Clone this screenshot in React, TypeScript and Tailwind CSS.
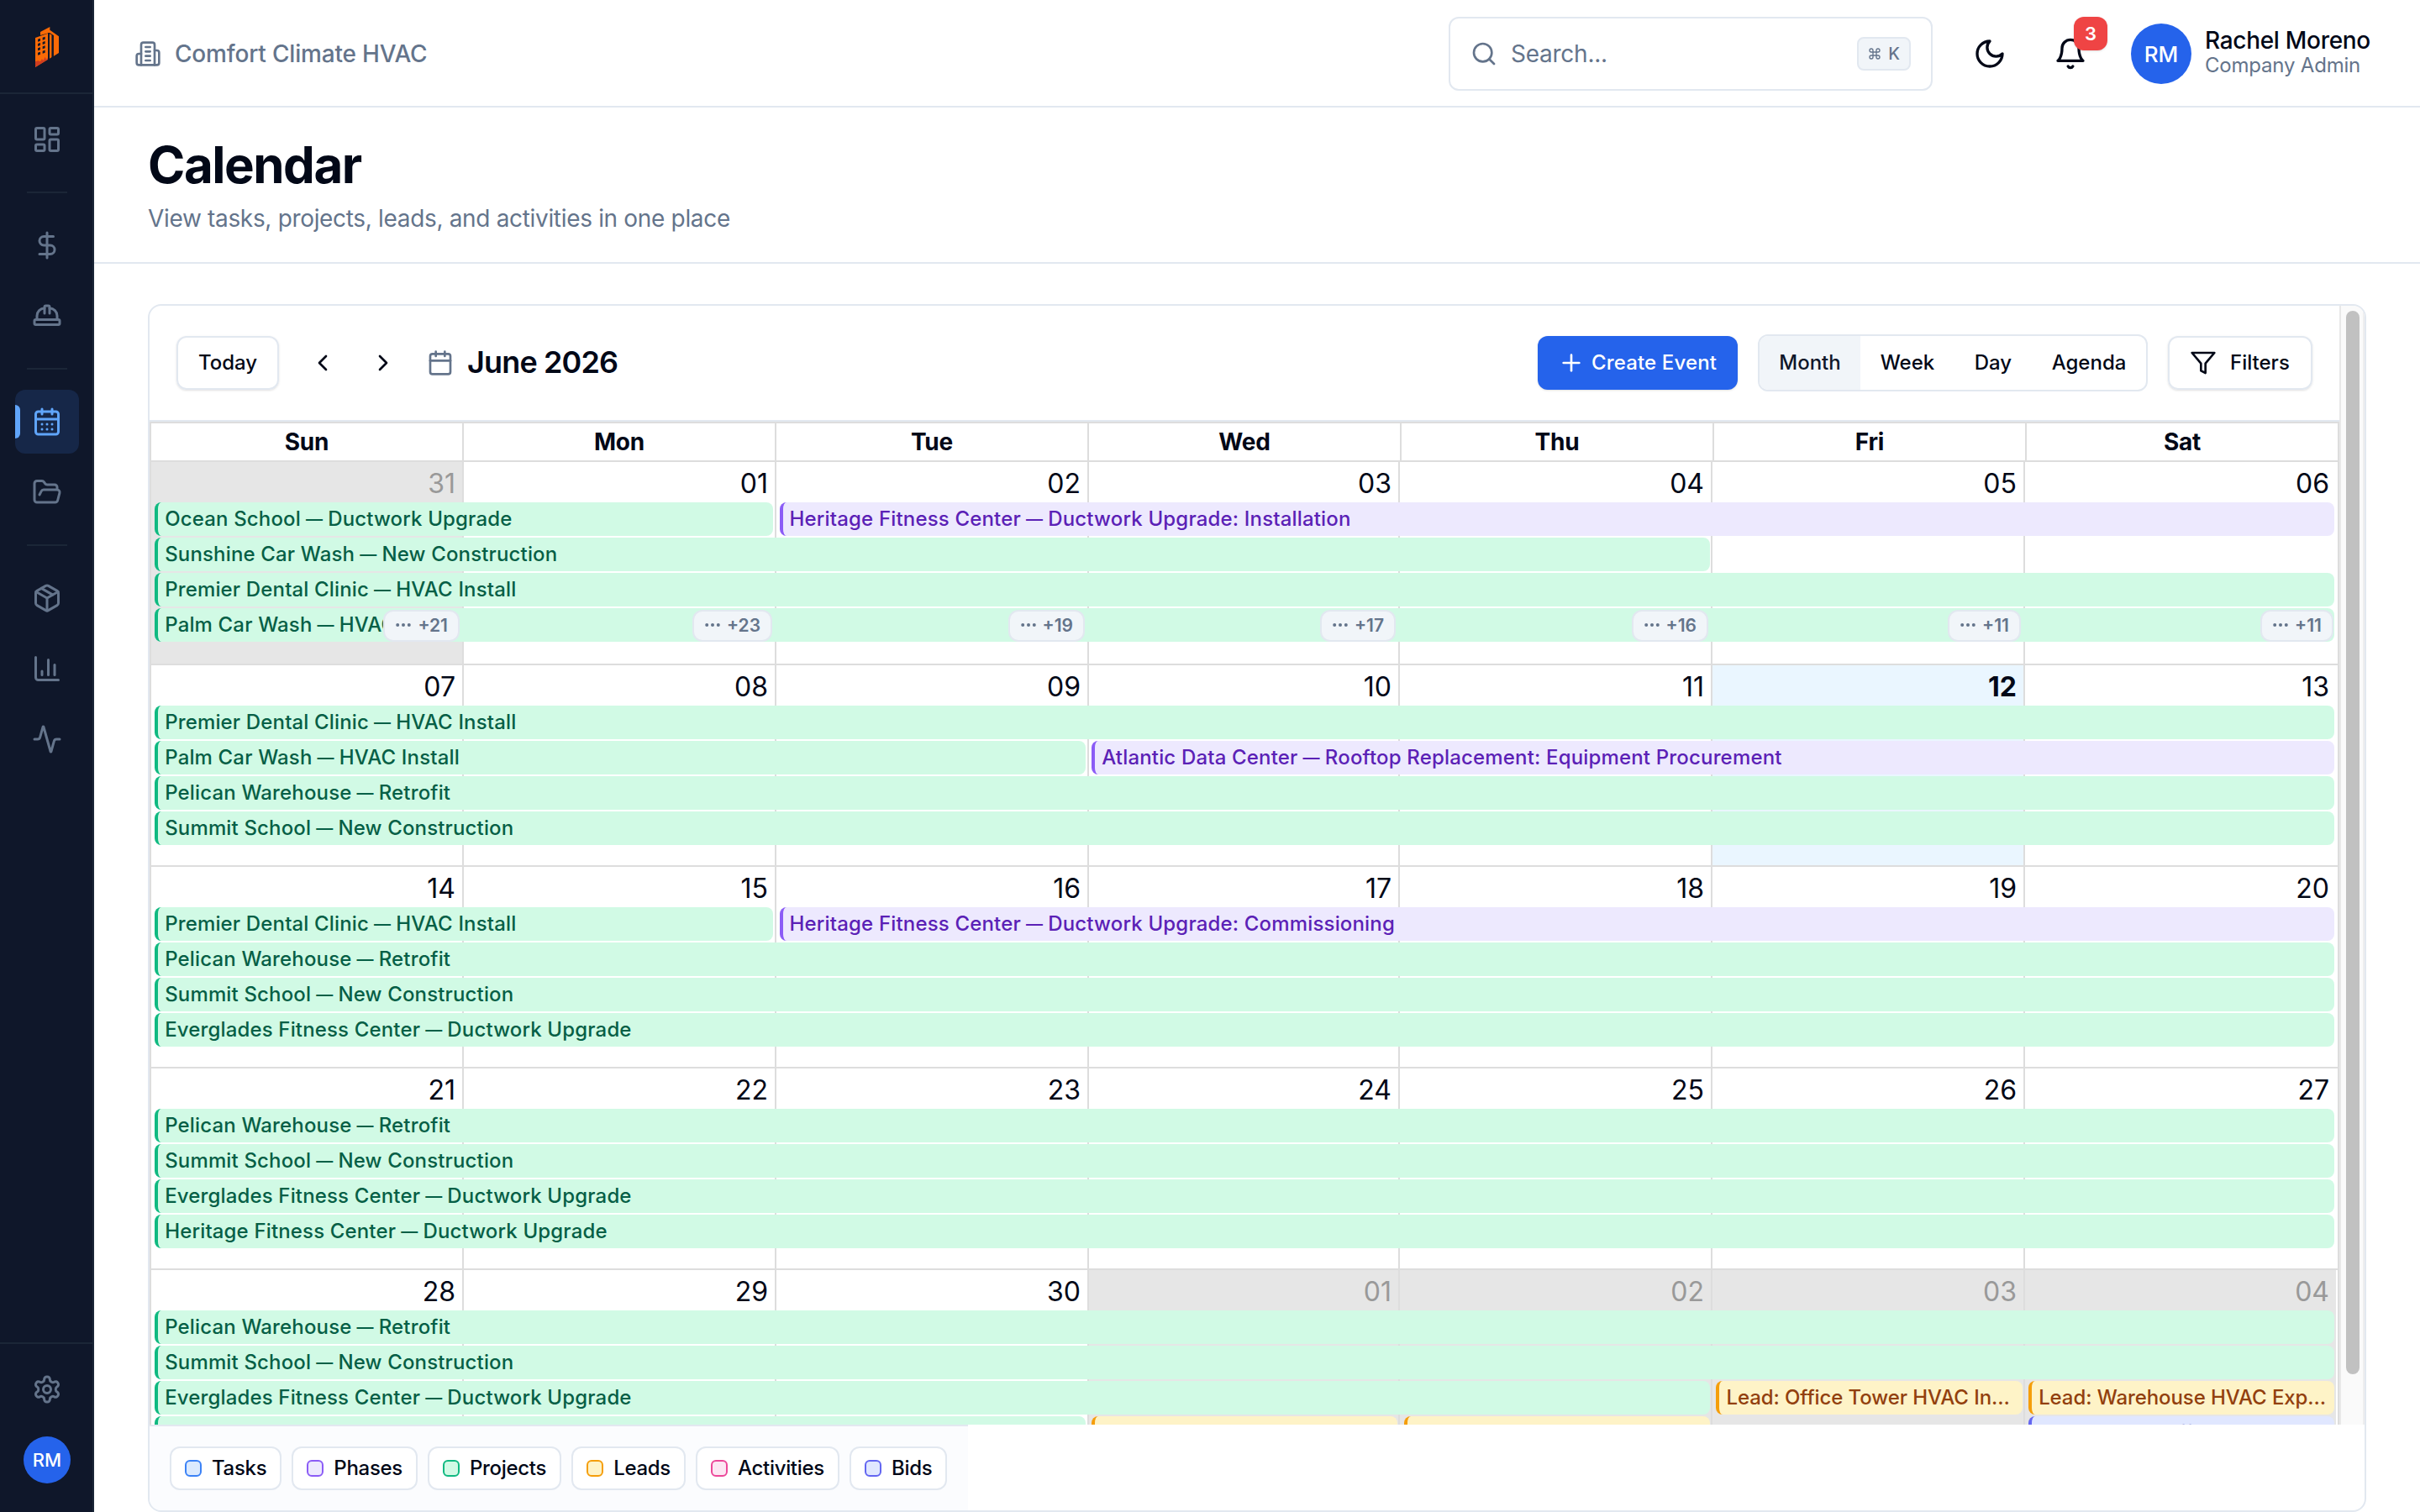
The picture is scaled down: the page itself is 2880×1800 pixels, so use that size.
import React from "react";
import {
  Activity,
  Calendar as CalendarIcon,
  CalendarDays,
  ChartColumn,
  ChevronLeft,
  ChevronRight,
  DollarSign,
  FolderOpen,
  HardHat,
  LayoutDashboard,
  Package,
  Plus,
  Search,
} from "lucide-react";

type EventKind = "project" | "phase" | "lead" | "bid";

type CalEvent = {
  title: string;
  kind: EventKind;
  start: number;
  span: number;
};

type Week = {
  days: string[];
  off?: number[];
  today?: number;
  rows: CalEvent[][];
  more?: string[];
};

const kindStyles: Record<EventKind, string> = {
  project: "border-[#10b981] bg-[#d1fae5] text-[#065f46] tracking-[0.15px]",
  phase: "border-[#8b5cf6] bg-[#ede9fe] text-[#5b21b6] tracking-[0.17px]",
  lead: "border-[#f59e0b] bg-[#fef3c7] text-[#92400e] tracking-[-0.08px]",
  bid: "border-[#6366f1] bg-[#e0e7ff] text-[#3730a3]",
};

const project = (title: string, start = 0, span = 7): CalEvent => ({ title, kind: "project", start, span });
const phase = (title: string, start: number, span: number): CalEvent => ({ title, kind: "phase", start, span });
const lead = (title: string, start: number): CalEvent => ({ title, kind: "lead", start, span: 1 });

const dayNames = ["Sun", "Mon", "Tue", "Wed", "Thu", "Fri", "Sat"];

const weeks: Week[] = [
  {
    days: ["31", "01", "02", "03", "04", "05", "06"],
    off: [0],
    rows: [
      [
        project("Ocean School — Ductwork Upgrade", 0, 2),
        phase("Heritage Fitness Center — Ductwork Upgrade: Installation", 2, 5),
      ],
      [project("Sunshine Car Wash — New Construction", 0, 5)],
      [project("Premier Dental Clinic — HVAC Install")],
      [project("Palm Car Wash — HVAC Install")],
    ],
    more: ["+21", "+23", "+19", "+17", "+16", "+11", "+11"],
  },
  {
    days: ["07", "08", "09", "10", "11", "12", "13"],
    today: 5,
    rows: [
      [project("Premier Dental Clinic — HVAC Install")],
      [
        project("Palm Car Wash — HVAC Install", 0, 3),
        phase("Atlantic Data Center — Rooftop Replacement: Equipment Procurement", 3, 4),
      ],
      [project("Pelican Warehouse — Retrofit")],
      [project("Summit School — New Construction")],
    ],
  },
  {
    days: ["14", "15", "16", "17", "18", "19", "20"],
    rows: [
      [
        project("Premier Dental Clinic — HVAC Install", 0, 2),
        phase("Heritage Fitness Center — Ductwork Upgrade: Commissioning", 2, 5),
      ],
      [project("Pelican Warehouse — Retrofit")],
      [project("Summit School — New Construction")],
      [project("Everglades Fitness Center — Ductwork Upgrade")],
    ],
  },
  {
    days: ["21", "22", "23", "24", "25", "26", "27"],
    rows: [
      [project("Pelican Warehouse — Retrofit")],
      [project("Summit School — New Construction")],
      [project("Everglades Fitness Center — Ductwork Upgrade")],
      [project("Heritage Fitness Center — Ductwork Upgrade")],
    ],
  },
  {
    days: ["28", "29", "30", "01", "02", "03", "04"],
    off: [3, 4, 5, 6],
    rows: [
      [project("Pelican Warehouse — Retrofit")],
      [project("Summit School — New Construction")],
      [
        project("Everglades Fitness Center — Ductwork Upgrade", 0, 5),
        lead("Lead: Office Tower HVAC In…", 5),
        lead("Lead: Warehouse HVAC Exp…", 6),
      ],
      [
        project("Heritage Fitness Center", 0, 3),
        lead("", 3),
        lead("", 4),
        { title: "Bid: Medical Office", kind: "bid", start: 6, span: 1 },
      ],
    ],
  },
];

const legend = [
  { label: "Tasks", swatch: "border-[#3b82f6] bg-[#dbeafe]" },
  { label: "Phases", swatch: "border-[#8b5cf6] bg-[#ede9fe]" },
  { label: "Projects", swatch: "border-[#10b981] bg-[#d1fae5]" },
  { label: "Leads", swatch: "border-[#f59e0b] bg-[#fef3c7]" },
  { label: "Activities", swatch: "border-[#ec4899] bg-[#fce7f3]" },
  { label: "Bids", swatch: "border-[#6366f1] bg-[#e0e7ff]" },
];

// --- Icons ---

function Logo() {
  return (
    <svg width="32" height="50" viewBox="60 30 96 150">
      <path d="M84 54 118 36V47L150 70V129L131 141V66L117 57 84 66Z" fill="#f96a06" />
      <path d="M66 75 111 59V152L66 180Z" fill="#f96a06" />
      <path d="M117 61 125 65V144L117 149Z" fill="#f96a06" />
      <path d="M111 58H117V151H111ZM125 66H131V146H125Z" fill="#0f172a" />
      <path d="M66 160 76 157 84 160 90 150 94 157 101 143 105 152 111 146V152L66 180Z" fill="#cf3d1f" />
      <path
        d="M75 80 84 77V86L75 89ZM92 74 101 71V80L92 83ZM75 96 84 93V102L75 105ZM92 90 101 87V96L92 99ZM75 112 84 109V118L75 121ZM92 106 101 103V112L92 115ZM75 128 84 125V134L75 137ZM92 122 101 119V128L92 131Z"
        fill="#0f172a"
      />
    </svg>
  );
}

function Icon({ size, className, children }: { size: number; className?: string; children: React.ReactNode }) {
  return (
    <svg
      width={size}
      height={size}
      viewBox="0 0 24 24"
      fill="none"
      stroke="currentColor"
      strokeWidth="2"
      strokeLinecap="round"
      strokeLinejoin="round"
      className={className}
    >
      {children}
    </svg>
  );
}

const BuildingIcon = () => (
  <Icon size={32}>
    <path d="M6 22V4a2 2 0 0 1 2-2h8a2 2 0 0 1 2 2v18Z" />
    <path d="M6 12H4a2 2 0 0 0-2 2v6a2 2 0 0 0 2 2h2" />
    <path d="M18 9h2a2 2 0 0 1 2 2v9a2 2 0 0 1-2 2h-2" />
    <path d="M10 6h4M10 10h4M10 14h4M10 18h4" />
  </Icon>
);

const MoonIcon = () => (
  <Icon size={40}>
    <path d="M12 3a6 6 0 0 0 9 9 9 9 0 1 1-9-9Z" />
  </Icon>
);

const BellIcon = () => (
  <Icon size={40}>
    <path d="M6 8a6 6 0 0 1 12 0c0 7 3 9 3 9H3s3-2 3-9" />
    <path d="M10.3 21a1.94 1.94 0 0 0 3.4 0" />
  </Icon>
);

const FilterIcon = () => (
  <Icon size={32}>
    <polygon points="22 3 2 3 10 12.46 10 19 14 21 14 12.46 22 3" />
  </Icon>
);

const SettingsIcon = () => (
  <Icon size={36}>
    <path d="M12.22 2h-.44a2 2 0 0 0-2 2v.18a2 2 0 0 1-1 1.73l-.43.25a2 2 0 0 1-2 0l-.15-.08a2 2 0 0 0-2.73.73l-.22.38a2 2 0 0 0 .73 2.73l.15.1a2 2 0 0 1 1 1.72v.51a2 2 0 0 1-1 1.74l-.15.09a2 2 0 0 0-.73 2.73l.22.38a2 2 0 0 0 2.73.73l.15-.08a2 2 0 0 1 2 0l.43.25a2 2 0 0 1 1 1.73V20a2 2 0 0 0 2 2h.44a2 2 0 0 0 2-2v-.18a2 2 0 0 1 1-1.73l.43-.25a2 2 0 0 1 2 0l.15.08a2 2 0 0 0 2.73-.73l.22-.39a2 2 0 0 0-.73-2.73l-.15-.08a2 2 0 0 1-1-1.74v-.5a2 2 0 0 1 1-1.74l.15-.09a2 2 0 0 0 .73-2.73l-.22-.38a2 2 0 0 0-2.73-.73l-.15.08a2 2 0 0 1-2 0l-.43-.25a2 2 0 0 1-1-1.73V4a2 2 0 0 0-2-2z" />
    <circle cx="12" cy="12" r="3" />
  </Icon>
);

// --- Sidebar ---

function NavItem({ active, children }: { active?: boolean; children: React.ReactNode }) {
  return (
    <a
      className={
        active
          ? "relative flex size-[76px] items-center justify-center rounded-xl bg-[#162748] text-[#60a5fa]"
          : "flex size-[76px] items-center justify-center rounded-xl text-[#64748b]"
      }
    >
      {active && <span className="absolute top-[18px] left-0 h-10 w-1.5 rounded-r-full bg-[#60a5fa]" />}
      {children}
    </a>
  );
}

const NavDivider = () => <div className="my-6 h-0.5 w-12 bg-[#1b2637]" />;

function Sidebar() {
  return (
    <aside className="flex h-full w-28 shrink-0 flex-col border-r-2 border-[#1b2637] bg-[#0f172a]">
      <div className="flex h-28 items-center justify-center border-b-2 border-[#1b2637] pl-0.5">
        <Logo />
      </div>
      <nav className="flex flex-1 flex-col items-center pt-4 pl-0.5">
        <NavItem><LayoutDashboard size={36} /></NavItem>
        <NavDivider />
        <div className="flex flex-col gap-2">
          <NavItem><DollarSign size={36} /></NavItem>
          <NavItem><HardHat size={36} /></NavItem>
        </div>
        <NavDivider />
        <div className="flex flex-col gap-2">
          <NavItem active><CalendarDays size={36} /></NavItem>
          <NavItem><FolderOpen size={36} /></NavItem>
        </div>
        <NavDivider />
        <div className="flex flex-col gap-2">
          <NavItem><Package size={36} /></NavItem>
          <NavItem><ChartColumn size={36} /></NavItem>
          <NavItem><Activity size={36} /></NavItem>
        </div>
      </nav>
      <div className="flex h-[202px] flex-col items-center gap-[18px] border-t-2 border-[#1b2637] pt-4 pl-0.5">
        <NavItem><SettingsIcon /></NavItem>
        <div className="flex size-14 items-center justify-center rounded-full bg-[#2563eb] text-[22px] font-medium text-white">
          RM
        </div>
      </div>
    </aside>
  );
}

// --- Top bar ---

function Header() {
  return (
    <header className="flex h-32 items-center justify-between border-b-2 border-[#e2e8f0] pt-0.5 pr-[60px] pl-12">
      <div className="flex items-center gap-4 text-[28px] font-medium tracking-[-0.18px] text-[#64748b]">
        <BuildingIcon />
        <span>Comfort Climate HVAC</span>
      </div>
      <div className="flex items-center">
        <div className="flex h-[88px] w-[576px] items-center gap-4 rounded-xl border-2 border-[#e2e8f0] px-6 text-[28px] text-[#64748b]">
          <Search size={32} />
          <span className="flex-1 tracking-[-0.25px]">Search...</span>
          <kbd className="flex h-10 w-16 items-center justify-center gap-2 rounded-lg border-2 border-[#e2e8f0] bg-[#f1f5f9] font-[Inter] text-[20px] font-medium">
            <Icon size={16}>
              <path d="M15 6v12a3 3 0 1 0 3-3H6a3 3 0 1 0 3 3V6a3 3 0 1 0-3 3h12a3 3 0 1 0-3-3" />
            </Icon>
            K
          </kbd>
        </div>
        <div className="ml-7 flex size-20 items-center justify-center">
          <MoonIcon />
        </div>
        <div className="relative ml-4 flex size-20 items-center justify-center">
          <BellIcon />
          <span className="absolute -top-1 -right-1 flex size-10 items-center justify-center rounded-xl bg-[#ef4444] text-[22px] font-semibold text-white shadow-sm">
            3
          </span>
        </div>
        <div className="ml-8 flex items-center gap-4">
          <div className="flex size-[72px] items-center justify-center rounded-full bg-[#2563eb] text-[26px] font-medium text-white">
            RM
          </div>
          <div className="w-[196px] whitespace-nowrap">
            <div className="text-[28px] leading-[28px] font-medium tracking-[-0.3px]">Rachel Moreno</div>
            <div className="text-[24px] leading-[32px] tracking-[-0.2px] text-[#64748b]">Company Admin</div>
          </div>
        </div>
      </div>
    </header>
  );
}

// --- Calendar ---

function Toolbar() {
  return (
    <div className="flex h-[138px] items-center justify-between border-b-2 border-[#e2e8f0] px-8 text-[24px] font-medium">
      <div className="flex items-center">
        <button className="mr-4 flex h-16 w-[122px] items-center justify-center rounded-xl border-2 border-[#e2e8f0] shadow-sm">
          Today
        </button>
        <button className="flex h-16 w-[72px] items-center justify-center"><ChevronLeft size={32} /></button>
        <button className="mr-4 flex h-16 w-[72px] items-center justify-center"><ChevronRight size={32} /></button>
        <CalendarIcon size={32} className="mr-4 text-[#64748b]" />
        <h2 className="pb-0.5 text-[36px] font-semibold tracking-[-0.85px]">June 2026</h2>
      </div>
      <div className="flex items-center gap-6">
        <button className="flex h-16 w-[238px] items-center gap-2 rounded-xl bg-[#2563eb] px-6 tracking-[0.15px] whitespace-nowrap text-white shadow-sm">
          <Plus size={32} />
          Create Event
        </button>
        <div className="flex h-[68px] overflow-hidden rounded-xl border-2 border-[#e2e8f0]">
          <button className="w-[120px] bg-[#f1f5f9] text-[#0f172a]">Month</button>
          <button className="w-28">Week</button>
          <button className="w-[92px]">Day</button>
          <button className="w-[136px]">Agenda</button>
        </div>
        <button className="flex h-16 w-[172px] items-center gap-4 rounded-xl border-2 border-[#e2e8f0] px-6 shadow-sm">
          <FilterIcon />
          Filters
        </button>
      </div>
    </div>
  );
}

const columns = "grid grid-cols-[370px_372px_372px_370px_372px_372px_372px]";

function EventTitle({ title }: { title: string }) {
  const [name, work] = title.split(" — ");
  if (!work) return <>{title}</>;
  return (
    <>
      {name} <span className="-mx-[0.5px] inline-block -translate-y-px text-[20px] leading-none font-semibold">—</span> {work}
    </>
  );
}

function WeekRow({ week, first }: { week: Week; first: boolean }) {
  return (
    <div className={first ? "relative h-[240px] w-[2602px]" : "relative h-[240px] w-[2602px] border-t-2 border-[#dddddd]"}>
      {/* day backgrounds sit under the event bars */}
      <div className={`absolute inset-0 ${columns}`}>
        {week.days.map((day, i) => (
          <div
            key={day}
            className={[
              i > 0 ? "border-l-2 border-[#dddddd]" : "",
              week.off?.includes(i) ? "bg-[#e6e6e6]" : "",
              week.today === i ? "bg-[#eaf6ff]" : "",
            ].join(" ")}
          />
        ))}
      </div>

      <div className="relative">
        <div className={`${columns} h-12 text-right text-[32px] leading-[51px]`}>
          {week.days.map((day, i) => (
            <div
              key={day}
              className={[
                "pr-2",
                week.off?.includes(i) ? "text-[#999999]" : "",
                week.today === i ? "font-bold" : "",
              ].join(" ")}
            >
              {day}
            </div>
          ))}
        </div>
        <div className="ml-[0.4px] flex w-[2601.6px] flex-col gap-0.5">
          {week.rows.map((row, r) => (
            <div key={r} className="grid h-10 grid-cols-7">
              {row.map((ev) => (
                <div
                  key={ev.start}
                  className={`mx-[3.8px] h-10 overflow-hidden rounded-lg border-l-4 pl-2 text-[24px] leading-10 font-medium whitespace-nowrap ${kindStyles[ev.kind]}`}
                  style={{ gridColumn: `${ev.start + 1} / span ${ev.span}` }}
                >
                  <EventTitle title={ev.title} />
                </div>
              ))}
            </div>
          ))}
        </div>
        {week.more && (
          <div className={`absolute top-44 left-0 ${columns}`}>
            {week.more.map((label, i) => (
              <div key={i} className="flex justify-end pr-[3px]">
                <button className="flex h-[38px] items-center gap-[7px] rounded-xl border-2 border-[#e2e8f0] bg-[#f1f5f9] px-3 text-[21px] font-semibold text-[#64748b]">
                  <svg width="20" height="6" viewBox="0 0 20 6" fill="currentColor">
                    <circle cx="3.2" cy="2" r="2" />
                    <circle cx="10" cy="2" r="2" />
                    <circle cx="16.8" cy="2" r="2" />
                  </svg>
                  {label}
                </button>
              </div>
            ))}
          </div>
        )}
      </div>
    </div>
  );
}

function MonthView() {
  return (
    <div className="border-2 border-b-0 border-[#dddddd]">
      <div className="grid h-[46px] grid-cols-[370px_372px_372px_372px_372px_372px_372px] border-b-2 border-[#dddddd] text-center text-[28px] leading-[44px] font-bold tracking-[-0.2px]">
        {dayNames.map((name, i) => (
          <div key={name} className={i > 0 ? "border-l-2 border-[#dddddd]" : ""}>
            {name}
          </div>
        ))}
      </div>
      {weeks.map((week, i) => (
        <WeekRow key={i} week={week} first={i === 0} />
      ))}
    </div>
  );
}

function Legend() {
  return (
    <div className="flex w-[974px] gap-3 border-t-2 border-[#e2e8f0] bg-[#fbfcfe] p-6 text-[24px] font-medium tracking-[-0.3px]">
      {legend.map(({ label, swatch }) => (
        <div key={label} className="flex h-[52px] items-center gap-3 rounded-xl border-2 border-[#e2e8f0] bg-white px-4">
          <span className={`size-5 rounded-md border-2 ${swatch}`} />
          {label}
        </div>
      ))}
    </div>
  );
}

export default function App() {
  return (
    <div className="flex h-[1800px] w-[2880px] overflow-hidden bg-white font-[Inter,sans-serif] text-[#020817]">
      <Sidebar />
      <div className="flex min-w-0 flex-1 flex-col">
        <Header />
        <div className="h-[186px] border-b-2 border-[#e2e8f0] px-16 pt-8">
          <h1 className="text-[60px] leading-[72px] font-bold tracking-tight">Calendar</h1>
          <p className="mt-2 text-[28px] leading-10 tracking-[-0.33px] text-[#64748b]">
            View tasks, projects, leads, and activities in one place
          </p>
        </div>
        <main className="flex-1 px-16 pt-12">
          <div className="flex h-[1438px] flex-col overflow-hidden rounded-2xl border-2 border-[#e2e8f0]">
            <div className="flex h-[1332px] shrink-0">
              <div className="w-[2606px] shrink-0 overflow-hidden">
                <Toolbar />
                <MonthView />
              </div>
              <div className="flex-1 border-x-2 border-l-[#e8e8e8] border-r-[#eeeeee] bg-[#fafafa] pt-1.5 pl-1.5">
                <div className="h-[1266px] w-4 rounded-full bg-[#c1c1c1]" />
              </div>
            </div>
            <Legend />
          </div>
        </main>
      </div>
    </div>
  );
}
